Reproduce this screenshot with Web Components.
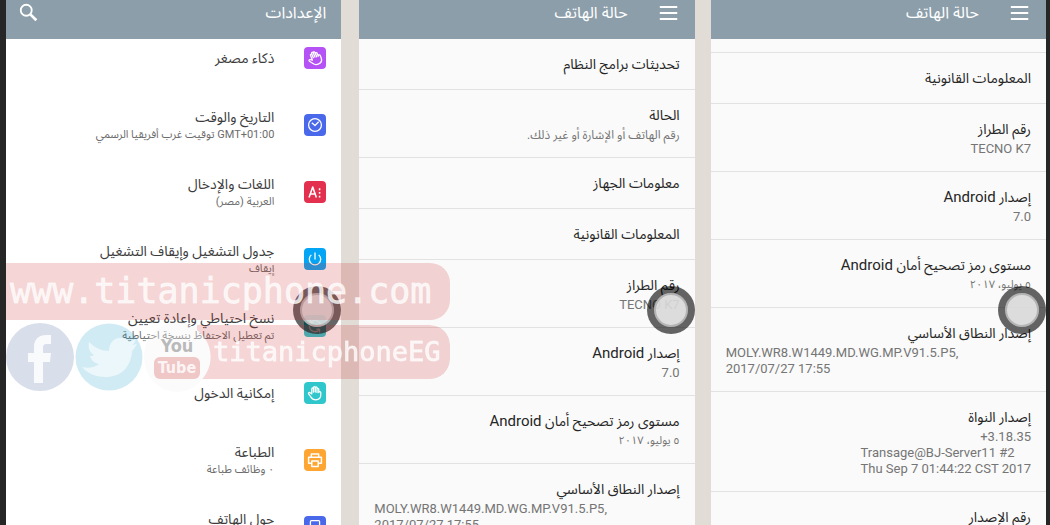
<!DOCTYPE html>
<html lang="ar">
<head>
<meta charset="utf-8">
<title>حالة الهاتف</title>
<style>
body {
  margin: 0;
  height: 100vh;
  overflow: hidden;
  background-color: #262626;
  font-family: Roboto, "Noto Sans Arabic", "Noto Sans", "DejaVu Sans", sans-serif;
}
</style>
</head>
<body>
<phone-board>
  <phone-screen heading="الإعدادات" action="search" style="--surface: #fff; --scroll: -15px">
    <settings-row icon="hand" color="#b452f5">ذكاء مصغر</settings-row>
    <settings-row icon="clock" color="#4a68ea">التاريخ والوقت<span slot="note"><bdi dir="ltr">GMT+01:00</bdi> توقيت غرب أفريقيا الرسمي</span></settings-row>
    <settings-row icon="language" color="#e2304e">اللغات والإدخال<span slot="note">العربية (مصر)</span></settings-row>
    <settings-row icon="power" color="#05a5f5">جدول التشغيل وإيقاف التشغيل<span slot="note">إيقاف</span></settings-row>
    <settings-row icon="backup" color="#2fc6cc">نسخ احتياطي وإعادة تعيين<span slot="note">تم تعطيل الاحتفاظ بنسخة احتياطية</span></settings-row>
    <settings-row icon="palm" color="#2fc6cc">إمكانية الدخول</settings-row>
    <settings-row icon="printer" color="#ffa532">الطباعة<span slot="note">٠ وظائف طباعة</span></settings-row>
    <settings-row icon="phone" color="#4a68ea">حول الهاتف<span slot="note">&nbsp;</span></settings-row>
  </phone-screen>

  <phone-screen heading="حالة الهاتف" action="menu">
    <info-row>تحديثات برامج النظام</info-row>
    <info-row>الحالة<span slot="note">رقم الهاتف أو الإشارة أو غير ذلك.</span></info-row>
    <info-row>معلومات الجهاز</info-row>
    <info-row>المعلومات القانونية</info-row>
    <info-row>رقم الطراز<bdi slot="note">TECNO K7</bdi></info-row>
    <info-row>إصدار <bdi>Android</bdi><bdi slot="note">7.0</bdi></info-row>
    <info-row>مستوى رمز تصحيح أمان <bdi>Android</bdi><time slot="note">٥ يوليو، ٢٠١٧</time></info-row>
    <info-row align="left">إصدار النطاق الأساسي<bdi slot="note">MOLY.WR8.W1449.MD.WG.MP.V91.5.P5,<br>2017/07/27 17:55</bdi></info-row>
  </phone-screen>

  <phone-screen heading="حالة الهاتف" action="menu" style="--scroll: -37px">
    <info-row></info-row>
    <info-row>المعلومات القانونية</info-row>
    <info-row>رقم الطراز<bdi slot="note">TECNO K7</bdi></info-row>
    <info-row>إصدار <bdi>Android</bdi><bdi slot="note">7.0</bdi></info-row>
    <info-row>مستوى رمز تصحيح أمان <bdi>Android</bdi><time slot="note">٥ يوليو، ٢٠١٧</time></info-row>
    <info-row align="left">إصدار النطاق الأساسي<bdi slot="note">MOLY.WR8.W1449.MD.WG.MP.V91.5.P5,<br>2017/07/27 17:55</bdi></info-row>
    <info-row>إصدار النواة<bdi slot="first" dir="ltr">+3.18.35</bdi><bdi slot="note">Transage@BJ-Server11 #2<br>Thu Sep 7 01:44:22 CST 2017</bdi></info-row>
    <info-row>رقم الإصدار</info-row>
  </phone-screen>
</phone-board>
<site-watermark></site-watermark>

<script>
const icons = {
  search: `<circle cx="9" cy="9" r="6" stroke-width="2"/><path d="M13.500 13.500 20 20" stroke-width="3"/>`,
  menu: `<path d="M2 5.500h19M2 12h19M2 18.500h19" stroke-width="2.200"/>`,
  hand: `<g transform="rotate(-22 12 12)"><path d="M8.500 13V7.500c0-1.300 1.900-1.300 1.900 0V11 6c0-1.300 1.900-1.300 1.900 0v5-4.700c0-1.300 1.900-1.300 1.900 0V11.500 8c0-1.300 1.900-1.300 1.900 0v3.500c0-1.300 2.200-1.300 2.200 0V14c0 3.500-2.400 5.500-5.500 5.500-2.800 0-4.200-1.200-5.400-3.200L5 13c-.6-1.300.9-2 1.700-1.200z"/></g>`,
  clock: `<circle cx="12" cy="12" r="7"/><path d="M8.500 9.500 12 12.500l4-4"/>`,
  language: `<path d="M5.500 18 9.500 6.500 13.500 18M7 14.200h5" stroke-width="1.700"/><path d="M17 8v2M17 12v2M17 16v2" stroke-width="1.700"/>`,
  power: `<path d="M8 7.500a6.200 6.200 0 1 0 8 0M12 5v7.500"/>`,
  backup: `<path d="M6 12a6 6 0 0 0 11 3.500M18 12A6 6 0 0 0 7 8.500M7 5v3.500h3.500M17 19v-3.500h-3.500"/>`,
  palm: `<path d="M8.500 13V7.500c0-1.300 1.900-1.300 1.900 0V11 6c0-1.300 1.900-1.300 1.900 0v5-4.700c0-1.300 1.900-1.300 1.900 0V11.500 8c0-1.300 1.900-1.300 1.900 0v3.500c0-1.300 2.200-1.300 2.200 0V14c0 3.500-2.400 5.500-5.500 5.500-2.800 0-4.200-1.200-5.400-3.200L5 13c-.6-1.300.9-2 1.700-1.200z"/>`,
  printer: `<path d="M8 9V5.500h8V9M8 15.500H5V9h14v6.500h-3M8.500 13h7v6h-7z" stroke-width="1.600"/>`,
  phone: `<rect x="7" y="5" width="10" height="15" rx="1"/><path d="M7 16h10"/>`
};

function svg(name) {
  return `<svg viewBox="0 0 24 24" fill="none" stroke="#fff" stroke-width="1.400" stroke-linejoin="round">${icons[name]}</svg>`;
}

class PhoneBoard extends HTMLElement {
  connectedCallback() {
    this.attachShadow({mode: "open"}).innerHTML = `
    <style>
      :host {
        display: grid;
        grid-template-columns: 1fr 18px 1fr 16px 1fr;
        height: 100%;
        margin: 0 4px 0 6px;
        background-color: #e2dcd7;
      }
      ::slotted(:nth-child(2)) { grid-column: 3; }
      ::slotted(:nth-child(3)) { grid-column: 5; }
    </style>
    <slot></slot>`;
  }
}

class PhoneScreen extends HTMLElement {
  connectedCallback() {
    const action = this.getAttribute("action");
    this.attachShadow({mode: "open"}).innerHTML = `
    <style>
      :host {
        display: flex;
        flex-direction: column;
        position: relative;
        min-width: 0;
        overflow: hidden;
        direction: rtl;
        background-color: var(--surface, #fafafa);
      }
      header {
        display: flex;
        align-items: center;
        z-index: 1;
        padding: 0 15px 13px;
        background-color: #8c9eaa;
        color: #fff;
      }
      header.menu { gap: 30px; }
      header.search {
        flex-direction: row-reverse;
        justify-content: space-between;
        padding-left: 12px;
      }
      h1 {
        margin: 0;
        font-size: 16px;
        line-height: 26px;
        font-weight: 400;
      }
      button {
        display: flex;
        padding: 0;
        border: 0;
        background: none;
      }
      button svg { width: 22px; height: 22px; }
      main { margin-top: var(--scroll, 0); }
      .touch {
        position: absolute;
        top: 286px;
        right: 0;
        box-sizing: border-box;
        width: 48px;
        height: 48px;
        border: 7px solid #0000009a;
        border-radius: 50%;
        background-color: #d9d9d9e8;
        background-clip: padding-box;
        box-shadow: inset 0 0 0 2px #b4b4b4;
      }
    </style>
    <header class="${action}">
      <button aria-label="${action}">${svg(action)}</button>
      <h1>${this.getAttribute("heading")}</h1>
    </header>
    <main><slot></slot></main>
    <div class="touch"></div>`;
  }
}

class SettingsRow extends HTMLElement {
  connectedCallback() {
    this.attachShadow({mode: "open"}).innerHTML = `
    <style>
      :host {
        display: flex;
        align-items: center;
        gap: 30px;
        height: 67px;
        padding: 0 15px;
      }
      .icon {
        display: flex;
        flex: none;
        width: 22px;
        height: 22px;
        border-radius: 4px;
        background-color: ${this.getAttribute("color")};
      }
      .title {
        font-size: 14px;
        line-height: 20px;
        color: #3c3c3c;
      }
      .note {
        font-size: 11px;
        line-height: 16px;
        color: #6c6c6c;
      }
    </style>
    <div class="icon">${svg(this.getAttribute("icon"))}</div>
    <div>
      <div class="title"><slot></slot></div>
      <div class="note"><slot name="note"></slot></div>
    </div>`;
  }
}

class InfoRow extends HTMLElement {
  connectedCallback() {
    const notes = [...this.querySelectorAll("[slot]")].map(item => item.slot);
    this.attachShadow({mode: "open"}).innerHTML = `
    <style>
      :host {
        display: block;
        border-bottom: 1px solid #e2e2e2;
      }
      .row {
        display: flex;
        flex-direction: column;
        align-items: flex-start;
        padding: 15px;
      }
      .row.noted { padding-bottom: 14px; }
      .title {
        min-height: 20px;
        font-size: 14px;
        line-height: 20px;
        color: #262626;
      }
      ::slotted(bdi:not([slot])) {
        font-size: 15px;
        line-height: 16px;
      }
      .note {
        font-size: 12px;
        line-height: 16px;
        color: #757575;
      }
      ::slotted([slot]) { display: block; }
      ::slotted(bdi[slot]) { font-size: 13px; }
      ::slotted(time) { font-size: 11px; }
      .title + .note { padding-top: 2px; }
      :host([align="left"]) .note { align-self: flex-end; }
    </style>
    <div class="row ${notes.length ? "noted" : ""}">
      <div class="title"><slot></slot></div>
      ${notes.map(name => `<div class="note"><slot name="${name}"></slot></div>`).join("")}
    </div>`;
  }
}

class SiteWatermark extends HTMLElement {
  connectedCallback() {
    this.attachShadow({mode: "open"}).innerHTML = `
    <style>
      :host {
        display: block;
        position: absolute;
        top: 263px;
        left: 6px;
        width: 444px;
        color: #ffffffc8;
        font-family: "DejaVu Sans Mono", monospace;
        -webkit-text-stroke: 1px #ffffff90;
        pointer-events: none;
      }
      .bar {
        border-radius: 0 20px 20px 0;
        background-color: #cd2d2d33;
      }
      .site {
        padding-left: 4px;
        font-size: 35px;
        line-height: 57px;
      }
      .social {
        display: flex;
        align-items: flex-start;
        gap: 1px;
        margin-top: 2px;
      }
      .social svg { flex: none; width: 68px; height: 70px; }
      .name {
        flex: 1;
        margin: 3px 0 0 -14px;
        padding-left: 16px;
        font-size: 27px;
        line-height: 54px;
        -webkit-mask-image: radial-gradient(circle at -20px 32px, transparent 33px, #000 34px);
        mask-image: radial-gradient(circle at -20px 32px, transparent 33px, #000 34px);
      }
      .tube {
        display: flex;
        flex-direction: column;
        align-items: center;
        justify-content: center;
        width: 66px;
        height: 70px;
        border-radius: 50%;
        background-color: #f5f5f560;
        font: bold 18px/22px "DejaVu Sans Condensed", "DejaVu Sans", sans-serif;
        color: #77777780;
        -webkit-text-stroke: 0;
      }
      .tube b {
        padding: 0 4px;
        border-radius: 6px;
        background-color: #cd2d2d40;
        font-size: 16px;
        color: #ffffffd0;
      }
    </style>
    <div class="bar site">www.titanicphone.com</div>
    <div class="social">
      <svg viewBox="0 0 68 70">
        <circle cx="34" cy="35" r="34" fill="#3b5998" opacity=".2"/>
        <path d="M28 61V40h-6v-9h6v-6c0-8 5-12 12-12h5v9h-4c-3 0-4 1-4 4v5h8l-1 9h-7v21z" fill="#fff" opacity=".85"/>
      </svg>
      <svg viewBox="0 0 68 70">
        <circle cx="34" cy="35" r="33.500" fill="#2aa3cc" opacity=".22"/>
        <path d="M7 45c7 2 13 0 17-3-5-1-8-4-9-8 2 0 3 0 4-1-5-3-6-8-5-13 6 6 13 9 20 9 0-8 5-14 12-13 4 0 6 2 8 4 3-1 5-2 7-3-1 3-2 5-4 6l5-1c-2 3-3 5-5 7-1 17-12 26-26 26-9 0-18-3-24-10z" fill="#fff" opacity=".6"/>
      </svg>
      <div class="tube">You<b>Tube</b></div>
      <div class="bar name">titanicphoneEG</div>
    </div>`;
  }
}

customElements.define("settings-row", SettingsRow);
customElements.define("info-row", InfoRow);
customElements.define("phone-screen", PhoneScreen);
customElements.define("phone-board", PhoneBoard);
customElements.define("site-watermark", SiteWatermark);
</script>
</body>
</html>
